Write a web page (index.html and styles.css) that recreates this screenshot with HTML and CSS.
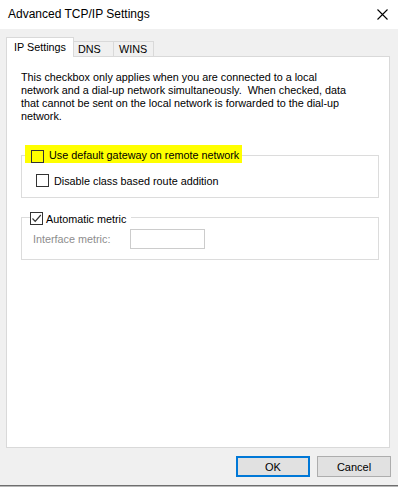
FILE: index.html
```html
<!DOCTYPE html>
<html>
<head>
<meta charset="utf-8">
<link rel="stylesheet" href="styles.css">
</head>
<body>
<div class="window">
  <div class="titlebar">
    <span class="title">Advanced TCP/IP Settings</span>
    <svg class="close" width="11" height="11" viewBox="0 0 11 11"><path d="M0.5 0.5L10.5 10.5M10.5 0.5L0.5 10.5" stroke="#000" stroke-width="1.1" fill="none"/></svg>
  </div>
  <div class="main">
    <div class="tabs">
      <div class="tab selected">IP Settings</div>
      <div class="tab">DNS</div>
      <div class="tab">WINS</div>
    </div>
    <div class="panel">
      <p class="info">This checkbox only applies when you are connected to a local<br>network and a dial-up network simultaneously.&nbsp; When checked, data<br>that cannot be sent on the local network is forwarded to the dial-up<br>network.</p>
      <div class="group group-gw">
        <div class="legend legend-hl">
          <span class="cb"></span>
          <span class="lbl">Use default gateway on remote network</span>
        </div>
        <div class="row row-route">
          <span class="cb"></span>
          <span class="lbl">Disable class based route addition</span>
        </div>
      </div>
      <div class="group group-metric">
        <div class="legend">
          <span class="cb checked"><svg width="11" height="11" viewBox="0 0 11 11"><path d="M1.5 5.5L4.2 8.3L9.8 2" stroke="#333" stroke-width="1.2" fill="none"/></svg></span>
          <span class="lbl">Automatic metric</span>
        </div>
        <div class="row row-metric">
          <span class="lbl disabled">Interface metric:</span>
          <span class="input"></span>
        </div>
      </div>
    </div>
    <div class="buttons">
      <button class="btn default">OK</button>
      <button class="btn">Cancel</button>
    </div>
  </div>
</div>
</body>
</html>
```

FILE: styles.css
```css
*, *::before, *::after {
  box-sizing: border-box;
}
html {
  background: #b8b8b8;
}
body {
  margin: 0;
  width: 398px;
  height: 487px;
  overflow: hidden;
  font-family: "Liberation Sans", Arial, sans-serif;
  font-size: 10.8px;
  color: #000;
}
.window {
  height: 486px;
  background: #f0f0f0;
  border-bottom: 1px solid #6e6e6e;
  display: flex;
  flex-direction: column;
}
.titlebar {
  height: 29px;
  background: #fff;
  display: flex;
  align-items: center;
  justify-content: space-between;
  padding: 0 10px 0 8px;
  flex-shrink: 0;
}
.title {
  font-size: 12px;
  margin-top: -1px;
}
.close {
  display: block;
  margin-top: -1px;
}
.main {
  flex: 1;
  display: flex;
  flex-direction: column;
  padding: 8px 8px 0 6px;
}
.tabs {
  display: flex;
  align-items: flex-end;
  height: 19px;
  position: relative;
  z-index: 1;
}
.tab {
  height: 15px;
  line-height: 14px;
  border: 1px solid #d9d9d9;
  border-bottom: none;
  background: #f0f0f0;
  padding: 0 0 0 4px;
  width: 41px;
  margin-left: -1px;
}
.tab:nth-child(3) {
  padding-left: 5px;
}
.tab.selected {
  margin-left: 0;
  height: 20px;
  line-height: 18px;
  width: 68px;
  padding: 0 0 0 7px;
  background: #fff;
  margin-bottom: -1px;
  position: relative;
  z-index: 2;
}
.panel {
  height: 392px;
  background: #fff;
  border: 1px solid #d9d9d9;
  padding: 14px 10px 0 14px;
  flex-shrink: 0;
}
.info {
  margin: 0;
  line-height: 13px;
}
.group {
  border: 1px solid #dcdcdc;
  display: flex;
  flex-direction: column;
  align-items: flex-start;
}
.group-gw {
  margin-top: 32px;
  padding-bottom: 10px;
}
.group-metric {
  margin-top: 19px;
  padding-bottom: 10px;
}
.legend {
  display: flex;
  align-items: center;
  background: #fff;
  height: 13px;
  margin-top: -6px;
  margin-left: 8px;
  padding-right: 5px;
}
.legend-hl {
  background: #ffff00;
  height: 18px;
  margin-top: -11px;
  margin-left: 3px;
  padding: 5px 3px 0 6px;
  align-items: flex-start;
}
.legend-hl .lbl {
  margin-top: -1px;
}
.cb {
  width: 13px;
  height: 13px;
  border: 1px solid #333;
  background: transparent;
  margin-right: 5px;
  flex-shrink: 0;
  display: block;
}
.cb svg {
  display: block;
}
.legend .cb.checked {
  margin-right: 3px;
}
.row {
  display: flex;
  align-items: center;
}
.row-route {
  margin-top: 11px;
  margin-left: 14px;
  height: 13px;
}
.row-metric {
  margin-top: 4px;
  margin-left: 11px;
  height: 20px;
}
.lbl.disabled {
  color: #8d8d8d;
  width: 97px;
}
.input {
  width: 75px;
  height: 20px;
  border: 1px solid #cccccc;
  background: #fff;
}
.buttons {
  display: flex;
  justify-content: flex-end;
  gap: 7px;
  margin-top: 8px;
  margin-right: -1px;
}
.btn {
  width: 74px;
  height: 21px;
  font-family: "Liberation Sans", Arial, sans-serif;
  font-size: 11px;
  color: #000;
  background: #e1e1e1;
  border: 1px solid #adadad;
  padding: 0;
  margin: 0;
}
.btn.default {
  border: 2px solid #0078d7;
}
```
